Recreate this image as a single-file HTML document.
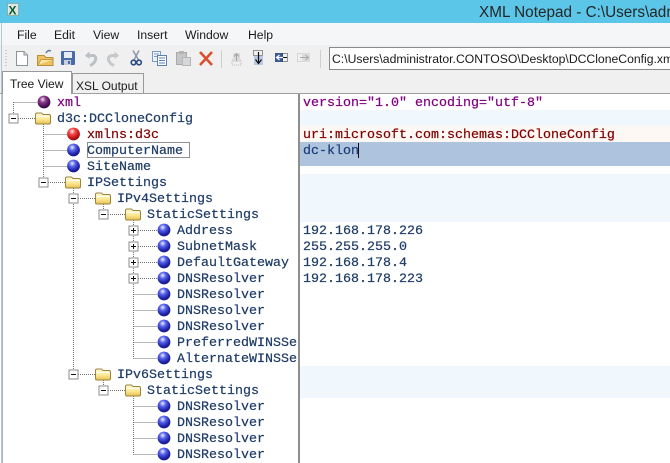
<!DOCTYPE html>
<html><head><meta charset="utf-8"><style>
html,body{margin:0;padding:0;background:#fff}
svg{display:block}
.m{font:13.33px "Liberation Mono",monospace;stroke-width:.22px}
.m text{stroke:currentColor}
.e{fill:#1f3c66;color:#1f3c66}
.s{font:12.2px "Liberation Sans",sans-serif;fill:#1a1a1a}
</style></head><body>
<svg width="670" height="463" viewBox="0 0 670 463" xmlns="http://www.w3.org/2000/svg">
<defs>
<radialGradient id="bl" cx=".4" cy=".3" r=".7"><stop offset="0" stop-color="#eef0ff"/><stop offset=".35" stop-color="#5a64e8"/><stop offset=".8" stop-color="#1b1fa8"/><stop offset="1" stop-color="#1a1c80"/></radialGradient>
<radialGradient id="rd" cx=".4" cy=".3" r=".7"><stop offset="0" stop-color="#ffe8e8"/><stop offset=".35" stop-color="#f04848"/><stop offset=".8" stop-color="#c01010"/><stop offset="1" stop-color="#801010"/></radialGradient>
<radialGradient id="pu" cx=".4" cy=".3" r=".7"><stop offset="0" stop-color="#f2e0f2"/><stop offset=".35" stop-color="#8a3a8a"/><stop offset=".8" stop-color="#4a0e5a"/><stop offset="1" stop-color="#300838"/></radialGradient>
<linearGradient id="fo" x1="0" y1="0" x2="0" y2="1"><stop offset="0" stop-color="#fffbd8"/><stop offset=".6" stop-color="#fbe58e"/><stop offset="1" stop-color="#e6c050"/></linearGradient>
<symbol id="b" overflow="visible"><circle cx="0" cy="0" r="6.4" fill="url(#bl)"/></symbol>
<symbol id="f" overflow="visible"><path d="M-7.500 4Q-7.500 5.500 -6 5.500H6Q7.500 5.500 7.500 4V-2.500Q7.500 -4 6 -4H0L-1.500 -5.500H-6Q-7.500 -5.500 -7.500 -4Z" fill="url(#fo)" stroke="#9a8440"/><path d="M-6.500 -2H6.500" stroke="#fffdf0" fill="none"/></symbol>
<symbol id="mi" overflow="visible"><rect x="-4.500" y="-4.500" width="9" height="9" fill="#fff" stroke="#8c8c8c"/><path d="M-2.500 0H2.500" stroke="#111" fill="none" shape-rendering="crispEdges"/></symbol>
<symbol id="pl" overflow="visible"><rect x="-4.500" y="-4.500" width="9" height="9" fill="#fff" stroke="#8c8c8c"/><path d="M-2.500 0H2.500M0 -2.500V2.500" stroke="#111" fill="none" shape-rendering="crispEdges"/></symbol>
</defs>

<!-- chrome -->
<rect x="0" y="0" width="670" height="23" fill="#5cc6e8"/>
<rect x="0" y="23" width="670" height="22" fill="#f5f6f7"/>
<rect x="0" y="45" width="670" height="49" fill="#f0f0f0"/>
<rect x="1" y="23" width="1" height="440" fill="#b4c6d0"/>
<!-- app icon -->
<rect x="7.500" y="3.500" width="11" height="12" fill="#dfe8e0" stroke="#6f8f80" stroke-dasharray="1 1"/>
<text x="8.500" y="14.500" style="font:bold 12px 'Liberation Sans',sans-serif" fill="#0c5a30">X</text>
<text x="479" y="17" style="font:15.3px 'Liberation Sans',sans-serif" fill="#262626">XML Notepad - C:\Users\adm</text>
<!-- menu -->
<text class="s" x="17" y="39">File</text>
<text class="s" x="54" y="39">Edit</text>
<text class="s" x="93" y="39">View</text>
<text class="s" x="137" y="39">Insert</text>
<text class="s" x="185" y="39">Window</text>
<text class="s" x="248" y="39">Help</text>

<!-- toolbar -->
<path d="M6 50V68" stroke="#a8a8a8" stroke-dasharray="1 2"/>
<!-- new -->
<path d="M16.500 51.500H24L27.500 55V65.500H16.500Z" fill="#fff" stroke="#8a929a"/><path d="M24 51.500V55H27.500" fill="#dde" stroke="#8a929a"/>
<!-- open -->
<path d="M37.500 65.500V55.500H44L46 57.500H53V65.500Z" fill="#eec060" stroke="#b89038"/><path d="M38 65L41 59.500H53" fill="#fae2a0" stroke="#c49c48"/><path d="M46 53Q48 49.500 51 51" fill="none" stroke="#6a80a0" stroke-width="1.500"/>
<!-- save -->
<rect x="61" y="51" width="14" height="14" rx="1" fill="#4a6aa8"/><rect x="64" y="52" width="8" height="6" fill="#e6ecf4"/><rect x="64" y="60" width="7" height="5" fill="#c8d0dc"/><rect x="68" y="61" width="2" height="3" fill="#4a6aa8"/>
<!-- undo / redo -->
<path d="M86 55.500H93Q96.500 56 95.500 60Q94 64 90 65.500" fill="none" stroke="#bcc0c4" stroke-width="3"/><path d="M85 55.500L89.500 51.500V59Z" fill="#bcc0c4"/>
<path d="M118 55.500H112Q108 56 108.500 60Q110 64 114 65.500" fill="none" stroke="#c6c9cc" stroke-width="3"/><path d="M119 55.500L114.500 51.500V59Z" fill="#c6c9cc"/>
<!-- cut -->
<path d="M133 50.500L138.500 60M139 50.500L134 60" stroke="#8a98a8" stroke-width="1.500" fill="none"/>
<circle cx="133.500" cy="62.500" r="2.300" fill="none" stroke="#2a4a80" stroke-width="1.600"/><circle cx="139" cy="62.500" r="2.300" fill="none" stroke="#2a4a80" stroke-width="1.600"/>
<!-- copy -->
<rect x="152.500" y="51.500" width="8" height="10" fill="#eef3fa" stroke="#7a9cc8"/><path d="M154 54H159M154 56.500H159" stroke="#7a9cc8"/>
<rect x="157.500" y="55.500" width="9" height="10" fill="#fff" stroke="#5a80b4"/><path d="M159 58H165M159 60.500H165M159 63H165" stroke="#5a80b4"/>
<!-- paste -->
<rect x="176.500" y="52.500" width="10" height="12" fill="#c4c6c8" stroke="#aaa"/><rect x="179" y="51" width="5" height="3" fill="#b2b4b6"/><rect x="182.500" y="57.500" width="8" height="8" fill="#d6d8da" stroke="#b4b6b8"/>
<!-- delete -->
<path d="M200 52L212 65M212 52L200 65" stroke="#d9512c" stroke-width="2.600" fill="none"/>
<path d="M221.500 50V68" stroke="#cfcfcf"/>
<!-- nudge up -->
<rect x="232" y="60" width="9" height="5" fill="none" stroke="#bbb" stroke-dasharray="1 1"/><rect x="233" y="53" width="7" height="9" fill="#dcdcdc"/><path d="M236.500 61V54M234 56.500L236.500 53.500L239 56.500" stroke="#a4a4a4" fill="none"/>
<!-- nudge down -->
<rect x="253.500" y="50.500" width="9" height="5" fill="none" stroke="#333" stroke-dasharray="1 1"/><rect x="254" y="56" width="9" height="9" fill="#b8c8e4"/><path d="M258.500 52V63M255.500 59.500L258.500 63.500L261.500 59.500" stroke="#111" stroke-width="1.200" fill="none"/>
<!-- nudge left -->
<rect x="275" y="53" width="8" height="9" fill="#3b5a94"/><rect x="282.500" y="53.500" width="5" height="8" fill="none" stroke="#333" stroke-dasharray="1 1"/><path d="M285 57.500H277M279.500 55L276.500 57.500L279.500 60" stroke="#fff" stroke-width="1.200" fill="none"/><path d="M283 57.500H287" stroke="#111"/>
<!-- nudge right -->
<rect x="297.500" y="53.500" width="5" height="8" fill="none" stroke="#bbb" stroke-dasharray="1 1"/><rect x="302" y="53" width="8" height="9" fill="#dcdcdc"/><path d="M300 57.500H308M305.500 55L308.500 57.500L305.500 60" stroke="#a8a8a8" fill="none"/>
<path d="M320.500 50V68" stroke="#cfcfcf"/>
<!-- address -->
<rect x="329.500" y="47.500" width="345" height="22" fill="#fff" stroke="#8a8a8a"/>
<text x="332" y="63" style="font:12.2px 'Liberation Sans',sans-serif" fill="#1a1a1a">C:\Users\administrator.CONTOSO\Desktop\DCCloneConfig.xml</text>

<!-- tabs -->
<path d="M72.500 93.500V73.500H143.500V93.500" fill="#f0f0f0" stroke="#9a9a9a"/>
<text x="76" y="90" style="font:12px 'Liberation Sans',sans-serif" fill="#1a1a1a">XSL Output</text>
<path d="M0 93.500H670" stroke="#a0a0a0"/>
<path d="M2.500 94V71.500H71.500V94" fill="#fff" stroke="#9a9a9a"/>
<rect x="3" y="92" width="68" height="3" fill="#fff"/>
<text x="10" y="88" style="font:12px 'Liberation Sans',sans-serif" fill="#1a1a1a">Tree View</text>

<!-- panes -->
<rect x="2" y="94" width="668" height="369" fill="#fff"/>
<rect x="2" y="94" width="1" height="369" fill="#b5b5b5"/>
<rect x="300" y="110" width="370" height="16" fill="#f0f7fd"/>
<rect x="300" y="126" width="370" height="16" fill="#fdf8f4"/>
<rect x="300" y="142" width="370" height="24" fill="#aec3dd"/>
<rect x="300" y="174" width="370" height="48" fill="#f0f7fd"/>
<rect x="300" y="366" width="370" height="32" fill="#f0f7fd"/>
<rect x="298" y="94" width="2" height="369" fill="#8e8e8e"/>

<!-- tree lines -->
<path d="M13.500 102.500H37M13.500 102V113M18 118.500H35M43.500 124V177M43.500 134.500H67M43.500 150.500H67M43.500 166.500H67M48 182.500H65M73.500 188V193M78 198.500H95M103.500 204V209M108 214.500H125M73.500 204V369M78 374.500H95M103.500 380V385M108 390.500H125M133.500 220V225M133.500 236V241M133.500 252V257M133.500 268V273M133.500 284V358.500M138 230.500H157M138 246.500H157M138 262.500H157M138 278.500H157M133.500 294.500H157M133.500 310.500H157M133.500 326.500H157M133.500 342.500H157M133.500 358.500H157M133.500 396V454.500M133.500 406.500H157M133.500 422.500H157M133.500 438.500H157M133.500 454.500H157" fill="none" stroke="#707070" stroke-dasharray="1 1" shape-rendering="crispEdges"/>

<!-- tree icons -->
<circle cx="44" cy="102" r="6.400" fill="url(#pu)"/>
<use href="#mi" x="13.500" y="118.500"/><use href="#f" x="43" y="118.500"/>
<circle cx="73.500" cy="134" r="6.400" fill="url(#rd)"/>
<use href="#b" x="73.500" y="150"/><use href="#b" x="73.500" y="166"/>
<use href="#mi" x="43.500" y="182.500"/><use href="#f" x="73" y="182.500"/>
<use href="#mi" x="73.500" y="198.500"/><use href="#f" x="103" y="198.500"/>
<use href="#mi" x="103.500" y="214.500"/><use href="#f" x="133" y="214.500"/>
<use href="#pl" x="133.500" y="230.500"/><use href="#b" x="164" y="230"/>
<use href="#pl" x="133.500" y="246.500"/><use href="#b" x="164" y="246"/>
<use href="#pl" x="133.500" y="262.500"/><use href="#b" x="164" y="262"/>
<use href="#pl" x="133.500" y="278.500"/><use href="#b" x="164" y="278"/>
<use href="#b" x="164" y="294"/><use href="#b" x="164" y="310"/><use href="#b" x="164" y="326"/><use href="#b" x="164" y="342"/><use href="#b" x="164" y="358"/>
<use href="#mi" x="73.500" y="374.500"/><use href="#f" x="103" y="374.500"/>
<use href="#mi" x="103.500" y="390.500"/><use href="#f" x="133" y="390.500"/>
<use href="#b" x="164" y="406"/><use href="#b" x="164" y="422"/><use href="#b" x="164" y="438"/><use href="#b" x="164" y="454"/>

<!-- focus rectangle -->
<rect x="87.500" y="142.500" width="102" height="15" fill="none" stroke="#222" stroke-dasharray="1 1" shape-rendering="crispEdges"/>

<!-- tree text -->
<g class="m">
<text x="57" y="106" fill="#800080" color="#800080">xml</text>
<text class="e" x="57" y="122">d3c:DCCloneConfig</text>
<text x="87" y="138" fill="#800000" color="#800000">xmlns:d3c</text>
<text class="e" x="87" y="154">ComputerName</text>
<text class="e" x="87" y="170">SiteName</text>
<text class="e" x="87" y="186">IPSettings</text>
<text class="e" x="117" y="202">IPv4Settings</text>
<text class="e" x="147" y="218">StaticSettings</text>
<text class="e" x="177" y="234">Address</text>
<text class="e" x="177" y="250">SubnetMask</text>
<text class="e" x="177" y="266">DefaultGateway</text>
<text class="e" x="177" y="282">DNSResolver</text>
<text class="e" x="177" y="298">DNSResolver</text>
<text class="e" x="177" y="314">DNSResolver</text>
<text class="e" x="177" y="330">DNSResolver</text>
<text class="e" x="177" y="346">PreferredWINSSe</text>
<text class="e" x="177" y="362">AlternateWINSSe</text>
<text class="e" x="117" y="378">IPv6Settings</text>
<text class="e" x="147" y="394">StaticSettings</text>
<text class="e" x="177" y="410">DNSResolver</text>
<text class="e" x="177" y="426">DNSResolver</text>
<text class="e" x="177" y="442">DNSResolver</text>
<text class="e" x="177" y="458">DNSResolver</text>
<!-- values -->
<text x="303" y="106" fill="#800080" color="#800080">version="1.0" encoding="utf-8"</text>
<text x="303" y="138" fill="#800000" color="#800000">uri:microsoft.com:schemas:DCCloneConfig</text>
<text x="303" y="154" fill="#1c3f7a" color="#1c3f7a">dc-klon</text>
<text class="e" x="303" y="234">192.168.178.226</text>
<text class="e" x="303" y="250">255.255.255.0</text>
<text class="e" x="303" y="266">192.168.178.4</text>
<text class="e" x="303" y="282">192.168.178.223</text>
</g>
<rect x="358" y="143" width="1" height="15" fill="#111"/>
</svg>
</body></html>
